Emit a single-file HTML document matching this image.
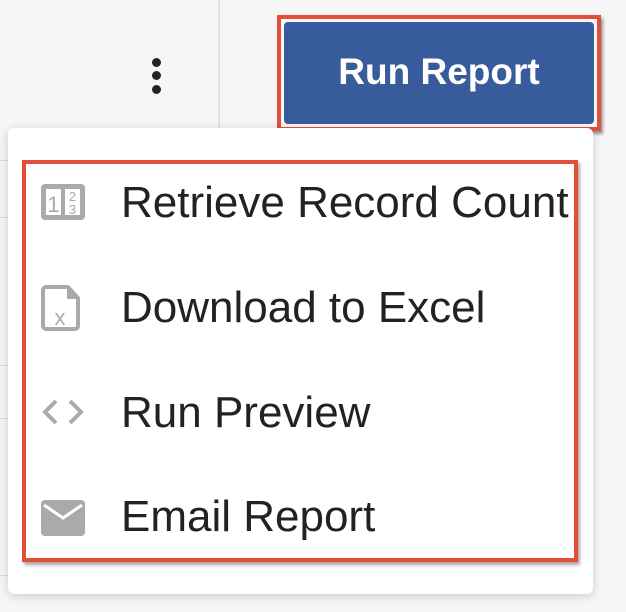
<!DOCTYPE html>
<html><head><style>
body{margin:0;width:626px;height:612px;background:#f6f6f6;position:relative;overflow:hidden;font-family:"Liberation Sans",Arial,sans-serif}
.vl{position:absolute;left:218px;top:0;width:2px;height:128px;background:#e4e4e4}
.hl{position:absolute;left:0;width:8px;height:1px;background:#ddd}
.dot{position:absolute;left:152px;width:9px;height:9px;border-radius:50%;background:#222}
.btnbox{position:absolute;left:277px;top:15px;width:316px;height:108px;border:4px solid #e2503b;box-shadow:2px 3px 3px rgba(0,0,0,.4)}
.btn{position:absolute;left:3px;top:3px;right:3px;bottom:3px;background:#385c9b;border-radius:4px;color:#fff;font-weight:bold;font-size:37px;text-align:center;line-height:100px}
.menu{position:absolute;left:8px;top:128px;width:585px;height:466px;background:#fff;border-radius:6px;box-shadow:0 2px 10px rgba(0,0,0,.18)}
.inner{position:absolute;left:22px;top:160px;width:548px;height:394px;border:4px solid #e2503b;box-shadow:2px 3px 3px rgba(0,0,0,.35)}
.item{position:absolute;left:121px;font-size:44px;color:#222;line-height:1}
.ic{position:absolute;left:40px}
</style></head><body>
<div class="vl"></div>
<div class="hl" style="top:160px"></div><div class="hl" style="top:217px"></div>
<div class="hl" style="top:365px"></div><div class="hl" style="top:418px"></div><div class="hl" style="top:575px"></div>
<div class="dot" style="top:58px"></div><div class="dot" style="top:71px"></div><div class="dot" style="top:85px"></div>
<div class="btnbox"><div class="btn">Run Report</div></div>
<div class="menu"></div>
<div class="inner"></div>
<svg class="ic" style="top:183px" width="46" height="40" viewBox="0 0 46 40"><rect x="1" y="1" width="44" height="36" rx="4" fill="#aaa"/><rect x="6" y="6" width="15" height="26" fill="#fff"/><rect x="25" y="6" width="15" height="26" fill="#fff"/><text x="13.5" y="29" font-size="22" font-family="Liberation Sans" fill="#aaa" text-anchor="middle">1</text><text x="32.5" y="18" font-size="13" font-family="Liberation Sans" fill="#aaa" text-anchor="middle">2</text><text x="32.5" y="31" font-size="13" font-family="Liberation Sans" fill="#aaa" text-anchor="middle">3</text></svg>
<svg class="ic" style="top:284px" width="46" height="48" viewBox="0 0 46 48"><path d="M6 3h22l10 11v28a3 3 0 0 1-3 3H6a3 3 0 0 1-3-3V6a3 3 0 0 1 3-3z" fill="#fff" stroke="#aaa" stroke-width="4"/><path d="M27 3v12h11z" fill="#aaa"/><text x="20" y="41" font-size="22" font-family="Liberation Sans" fill="#aaa" text-anchor="middle">x</text></svg>
<svg class="ic" style="top:398px" width="46" height="30" viewBox="0 0 46 30"><path d="M16 3L5 14l11 11M30 3l11 11-11 11" fill="none" stroke="#aaa" stroke-width="4"/></svg>
<svg class="ic" style="top:499px" width="46" height="38" viewBox="0 0 46 38"><rect x="1" y="1" width="44" height="36" rx="4" fill="#aaa"/><path d="M4 6l19 13 19-13" fill="none" stroke="#fff" stroke-width="3"/></svg>
<div class="item" style="top:181px">Retrieve Record Count</div>
<div class="item" style="top:286px">Download to Excel</div>
<div class="item" style="top:391px">Run Preview</div>
<div class="item" style="top:495px">Email Report</div>
</body></html>
